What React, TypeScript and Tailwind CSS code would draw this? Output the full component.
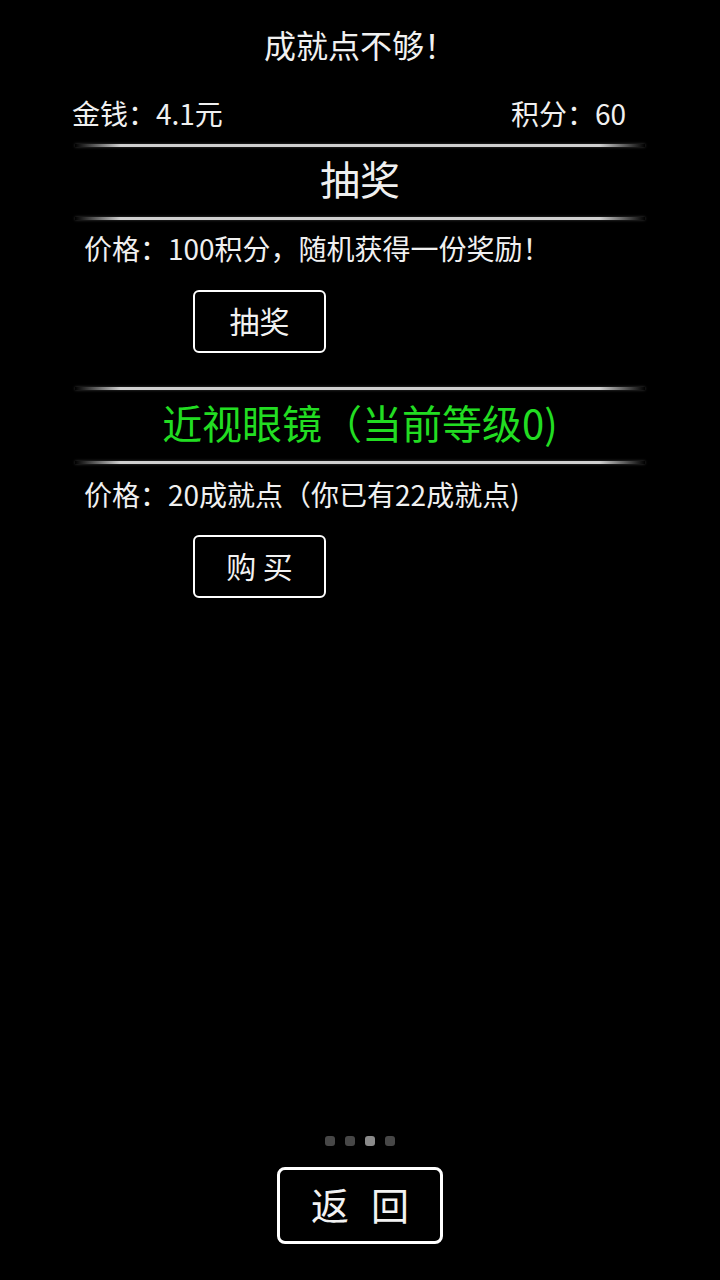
const font = { fontFamily: '"Noto Sans CJK SC", "Noto Sans", sans-serif' };

function Divider({ className = "" }: { className?: string }) {
    return (
        <div
            className={`ml-[75px] w-[570px] h-[3px] bg-[linear-gradient(to_right,transparent,#d0d0d0_8%,#d0d0d0_92%,transparent)] shadow-[0_0_3px_rgba(255,255,255,0.25)] ${className}`}
        />
    );
}

function OutlineButton({ label, className = "" }: { label: string; className?: string }) {
    return (
        <button
            type="button"
            className={`ml-[193px] w-[133px] h-[63px] pb-[3px] border-2 border-white rounded-[6px] bg-black text-[30px] text-[#f2f2f2] flex items-center justify-center whitespace-pre ${className}`}
        >
            {label}
        </button>
    );
}

export default function App() {
    const dots = [false, false, true, false];

    return (
        <div className="w-[720px] min-h-[1280px] bg-black text-[#f0f0f0] flex flex-col" style={font}>
            <div className="mt-[24px] h-[40px] leading-[40px] text-center text-[32px]">成就点不够！</div>

            <div className="mt-[29px] h-[40px] pl-[72px] pr-[94px] flex items-center justify-between text-[28px]">
                <span>金钱：4.1元</span>
                <span>积分：60</span>
            </div>

            <Divider className="mt-[11px]" />
            <div className="mt-[6px] h-[50px] leading-[50px] text-center text-[40px]">抽奖</div>
            <Divider className="mt-[14px]" />

            <div className="mt-[10px] h-[36px] leading-[36px] pl-[84px] text-[28px]">价格：100积分，随机获得一份奖励！</div>
            <OutlineButton label="抽奖" className="mt-[24px]" />

            <Divider className="mt-[34px]" />
            <div className="mt-[7px] h-[50px] leading-[50px] text-center text-[40px] text-[#22dd22]">近视眼镜（当前等级0)</div>
            <Divider className="mt-[14px]" />

            <div className="mt-[12px] h-[36px] leading-[36px] pl-[84px] text-[28px]">价格：20成就点（你已有22成就点)</div>
            <OutlineButton label="购 买" className="mt-[23px] h-[62px]" />

            <div className="flex-1" />

            {/* page indicator */}
            <div className="flex justify-center gap-[10px]">
                {dots.map((active, i) => (
                    <span
                        key={i}
                        className={`w-[10px] h-[10px] rounded-[3px] ${active ? "bg-[#8a8a8a]" : "bg-[#474747]"}`}
                    />
                ))}
            </div>

            <div className="mt-[21px] mb-[36px] flex justify-center">
                <button
                    type="button"
                    className="w-[166px] h-[77px] pb-[4px] border-[3px] border-white rounded-[8px] bg-black text-[38px] text-[#f2f2f2] flex items-center justify-center gap-[22px]"
                >
                    <span>返</span>
                    <span>回</span>
                </button>
            </div>
        </div>
    );
}
